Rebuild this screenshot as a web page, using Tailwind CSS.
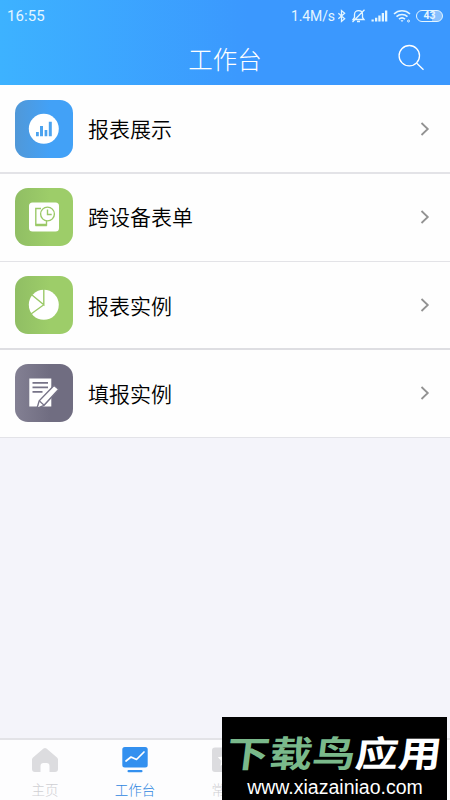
<!DOCTYPE html>
<html lang="zh-CN">
<head>
<meta charset="utf-8">
<title>工作台</title>
<script src="https://cdn.jsdelivr.net/npm/@tailwindcss/browser@4"></script>
</head>
<body class="w-[450px] h-[800px] overflow-hidden bg-[#f4f4fa] font-['Noto_Sans_CJK_SC',sans-serif] font-[350]">
<div class="relative flex flex-col h-[800px] overflow-hidden">
  <header class="h-[85px] shrink-0 bg-linear-to-r from-[#3db2ff] to-[#3b98fe] to-55% text-white flex flex-col">
    <div class="h-[31px] flex items-center pl-[7px] pr-[7px] font-[Roboto,sans-serif] font-normal text-[#e4f6ff]">
      <span class="text-[15px] leading-[32px] tracking-[0.1px]">16:55</span>
      <span class="ml-auto text-[14px] leading-[32px] -tracking-[0.1px]">1.4M/s</span>
      <svg class="ml-[2px] w-[9px] h-[14px]" viewBox="0 0 10 14" fill="none" stroke="currentColor" stroke-width="1.4"><path d="M1.500 4l7 6L5 13V1l3.500 3-7 6"/></svg>
      <svg class="ml-[5px] w-[15px] h-[14px]" viewBox="0 0 15 14" fill="none" stroke="currentColor" stroke-width="1.3"><path d="M2 10.500h11l-1.500-2V5.500C11.500 3 9.800 1.700 7.500 1.700S3.500 3 3.500 5.500v3zM6 12.500h3M13.500 .8L1.500 13"/></svg>
      <svg class="ml-[5px] w-[17px] h-[12px]" viewBox="0 0 17 12" fill="currentColor"><path d="M.5 9.500h2.300V11.500H.5zM4 7.800h2.300v3.700H4zM7.300 5.500h2.300v6H7.300zM10.700 3h2.300v8.500h-2.300zM14 .5h2.300v11H14z"/></svg>
      <svg class="ml-[5px] w-[18px] h-[14px]" viewBox="0 0 18 14" fill="none" stroke="currentColor" stroke-width="1.6"><path d="M1 5c4.500-4.300 11.500-4.300 16 0M3.500 7.700c3.200-3 7.800-3 11 0M6 10.200c1.800-1.600 4.200-1.600 6 0"/><path d="M7.500 11.300h3L9 13z" fill="currentColor" stroke="none"/><circle cx="15.500" cy="12" r="1" stroke-width="1"/></svg>
      <span class="ml-[5px] w-[27px] h-[12px] rounded-full border border-[#e4f6ff] bg-linear-to-r from-transparent from-60% to-white/40 to-60% text-[10.5px] leading-[10px] font-bold text-center">43</span>
    </div>
    <div class="relative flex-1 flex justify-center">
      <h1 class="text-[24.5px] leading-[55px] font-light">工作台</h1>
      <svg class="absolute left-[398px] top-[13px] w-[28px] h-[28px]" viewBox="0 0 28 28" fill="none" stroke="currentColor" stroke-width="1.300"><circle cx="11.300" cy="11.700" r="10.200"/><path d="M18.500 19l7 6.700"/></svg>
    </div>
  </header>

  <main class="shrink-0 bg-[#fefefe] text-[21px] text-black">
    <div class="h-[89px] border-b-2 border-[#e3e3e7] flex items-center px-[15px]">
      <svg class="w-[58px] h-[58px] rounded-[13px] bg-linear-to-r from-[#5098d8] to-[#42a1f7] to-60%" viewBox="0 0 58 58"><circle cx="28.800" cy="28.800" r="15" fill="#fff"/><path d="M21 32h2.800v4.300H21zM25 26h3v10.300h-3zM29.600 30h2.700v6.300h-2.700zM33.800 21.700h3v14.600h-3z" fill="#4ca3ef"/></svg>
      <span class="ml-[15px] leading-none">报表展示</span>
      <svg class="ml-auto mr-[5px] w-[10px] h-[14px]" viewBox="0 0 10 14" fill="none" stroke="#929292" stroke-width="1.800"><path d="M1.500 1l6.300 6-6.300 6"/></svg>
    </div>
    <div class="h-[88px] border-b border-[#e3e3e7] flex items-center px-[15px] pb-[2px]">
      <svg class="w-[58px] h-[58px] rounded-[13px] bg-linear-to-r from-[#90be64] to-[#9dcd69] to-60%" viewBox="0 0 58 58"><rect x="14" y="14.500" width="30" height="29" rx="3.500" fill="#fff"/><g fill="none" stroke="#9bc968" stroke-width="1.400"><path d="M26 20.500h-5.200v16.500h10.700v-4"/><path d="M20.500 37h11.300" stroke-width="2.500"/><circle cx="32.500" cy="26" r="6.900"/><path d="M32.500 21.500v5h4.200"/></g></svg>
      <span class="ml-[15px] leading-none">跨设备表单</span>
      <svg class="ml-auto mr-[5px] w-[10px] h-[14px]" viewBox="0 0 10 14" fill="none" stroke="#929292" stroke-width="1.800"><path d="M1.500 1l6.300 6-6.300 6"/></svg>
    </div>
    <div class="h-[88px] border-b-2 border-[#dedee2] flex items-center px-[15px]">
      <svg class="w-[58px] h-[58px] rounded-[13px] bg-linear-to-r from-[#90be64] to-[#9dcd69] to-60%" viewBox="0 0 58 58"><circle cx="28.800" cy="28.800" r="15" fill="#fff"/><path d="M28.800 13v15.800L17 19M28.800 28.800L16 38" fill="none" stroke="#9bc968" stroke-width="1.400"/></svg>
      <span class="ml-[15px] leading-none">报表实例</span>
      <svg class="ml-auto mr-[5px] w-[10px] h-[14px]" viewBox="0 0 10 14" fill="none" stroke="#929292" stroke-width="1.800"><path d="M1.500 1l6.300 6-6.300 6"/></svg>
    </div>
    <div class="h-[88px] border-b border-[#e3e3e8] flex items-center px-[15px] pb-[1px]">
      <svg class="w-[58px] h-[58px] rounded-[13px] bg-linear-to-r from-[#838093] to-[#706d81] to-60%" viewBox="0 0 58 58"><path d="M14.300 14.500h22v28h-22z" fill="#fff"/><path d="M17.500 18.800h15.500M17.500 23.300h15.500M17.500 27.800h10" stroke="#777488" stroke-width="1.700"/><path d="M39 21.500l4.700 3.800L29 41.300l-7 3 2.200-7.500z" fill="#fff" stroke="#777488" stroke-width="1.400"/><path d="M24.500 37l4.300 4" stroke="#777488" stroke-width="1.200"/></svg>
      <span class="ml-[15px] leading-none">填报实例</span>
      <svg class="ml-auto mr-[5px] w-[10px] h-[14px]" viewBox="0 0 10 14" fill="none" stroke="#929292" stroke-width="1.800"><path d="M1.500 1l6.300 6-6.300 6"/></svg>
    </div>
  </main>

  <nav class="mt-auto h-[62px] shrink-0 bg-[#fdfdfe] border-t-2 border-[#e3e3e7] grid grid-cols-5 text-[13.500px] font-light text-[#cfcfd3]">
    <div class="flex flex-col items-center pt-[7px]">
      <svg class="w-[26px] h-[26px]" viewBox="0 0 26 26"><path d="M11.500 1.500q1.500-1 3 0L25 10.500q1 .8 1 2V22q0 3-3 3h-5.500v-6q0-3-3-3h-3q-3 0-3 3V25H3q-3 0-3-3v-9.500q0-1.200 1-2z" fill="#dcdcdf"/></svg>
      <span class="mt-[6px] leading-[20px]">主页</span>
    </div>
    <div class="flex flex-col items-center pt-[7px] text-[#2f87e0]">
      <svg class="w-[26px] h-[26px]" viewBox="0 0 26 26"><rect x=".3" width="25.400" height="20.500" rx="2.500" fill="#3390ef"/><rect x="5.500" y="23" width="15" height="2.300" rx="1" fill="#3390ef"/><path d="M4 14l5-4 5.500 2.500L22 5" fill="none" stroke="#fff" stroke-width="1.700" stroke-linecap="round" stroke-linejoin="round"/></svg>
      <span class="mt-[6px] leading-[20px]">工作台</span>
    </div>
    <div class="flex flex-col items-center pt-[7px]">
      <svg class="w-[26px] h-[26px]" viewBox="0 0 26 26"><rect y=".5" width="26" height="24.500" rx="3" fill="#dcdcdf"/><path d="M13 5l2.200 4.500 5 .7-3.600 3.500.9 5-4.500-2.400-4.500 2.400.9-5-3.600-3.500 5-.7z" fill="#fff"/></svg>
      <span class="mt-[6px] leading-[20px]">常用</span>
    </div>
  </nav>

  <div class="absolute left-[222px] top-[717px] w-[225px] h-[83px] bg-black flex flex-col items-center">
    <div class="mt-[16px] h-[37px] text-[43px] leading-[37px] font-bold whitespace-nowrap -skew-x-6 text-white scale-y-[.84]"><span class="text-[#7ab98b]">下载鸟</span>应用</div>
    <div class="mt-[4px] ml-[1px] text-[19.500px] leading-[26px] text-white font-normal font-['Liberation_Sans',sans-serif]">www.xiazainiao.com</div>
  </div>
</div>
</body>
</html>
